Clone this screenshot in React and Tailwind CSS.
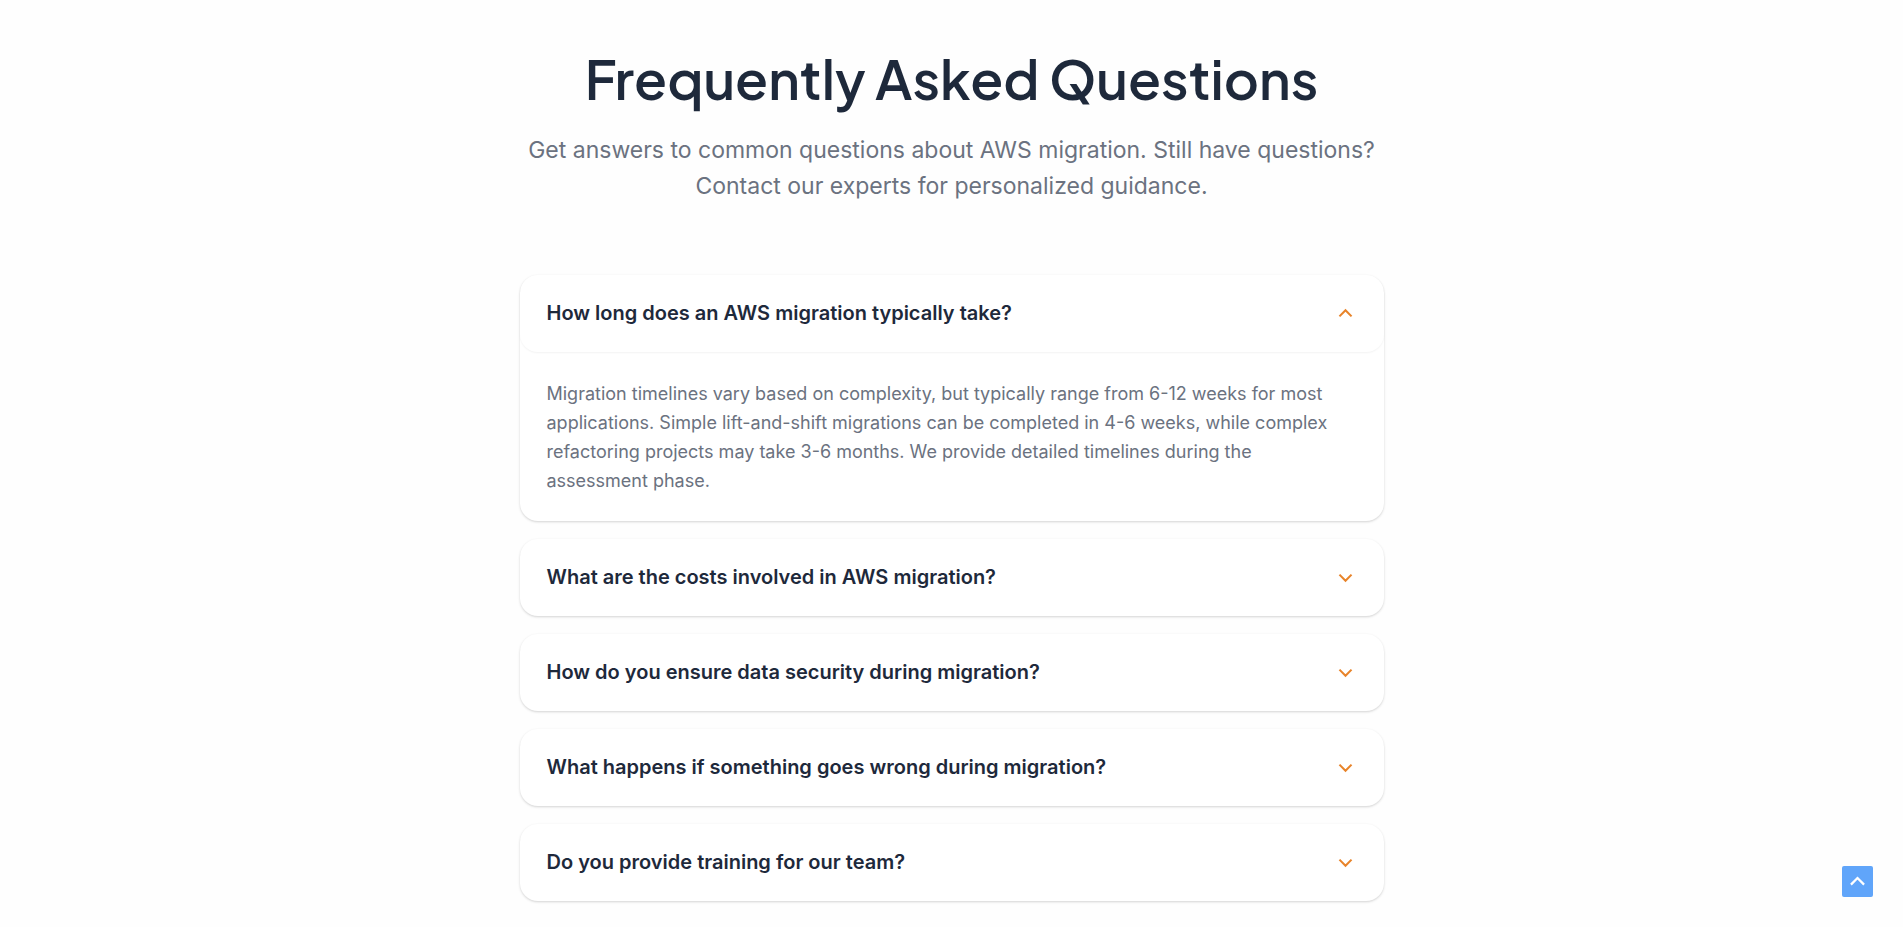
import { useState } from "react";

const faqs = [
  {
    question: "How long does an AWS migration typically take?",
    answer:
      "Migration timelines vary based on complexity, but typically range from 6-12 weeks for most applications. Simple lift-and-shift migrations can be completed in 4-6 weeks, while complex refactoring projects may take 3-6 months. We provide detailed timelines during the assessment phase.",
  },
  { question: "What are the costs involved in AWS migration?" },
  { question: "How do you ensure data security during migration?" },
  { question: "What happens if something goes wrong during migration?" },
  { question: "Do you provide training for our team?" },
];

function Chevron({ up, className }) {
  return (
    <svg viewBox="0 0 24 24" fill="none" stroke="currentColor" strokeWidth="2.2" aria-hidden="true" className={className}>
      <path d={up ? "M5.7 15l6.3-6.3 6.3 6.3" : "M5.7 9l6.3 6.3 6.3-6.3"} />
    </svg>
  );
}

function FaqItem({ id, item, open, onToggle }) {
  return (
    <div className="rounded-[18px] bg-white shadow-[0_1px_3px_rgba(0,0,0,0.1),0_1px_2px_rgba(0,0,0,0.08)]">
      <h3>
        <button
          type="button"
          id={`${id}-button`}
          aria-expanded={open}
          aria-controls={`${id}-panel`}
          onClick={onToggle}
          className={`flex w-full items-center justify-between rounded-[18px] px-[27px] py-6 text-left text-xl/[29px] font-semibold text-[#1e293b] ${open ? "shadow-[0_1px_2px_rgba(0,0,0,0.05)]" : ""}`}
        >
          <span>{item.question}</span>
          <Chevron up={open} className="size-[23px] shrink-0 text-[#e8842a]" />
        </button>
      </h3>
      {open && item.answer && (
        <div
          id={`${id}-panel`}
          role="region"
          aria-labelledby={`${id}-button`}
          className="px-[27px] pt-[27px] pb-[26px] text-lg/[29px] text-[#6b7280]"
        >
          {item.answer}
        </div>
      )}
    </div>
  );
}

export default function App() {
  const [openIndex, setOpenIndex] = useState(0);
  return (
    <main className="min-h-screen bg-[#fefefe] px-6 pt-11 pb-[26px] font-['Inter',sans-serif]">
      <div className="mx-auto max-w-[864px]">
        <header className="mb-[71px] text-center">
          <h1 className="mb-5 font-['Plus_Jakarta_Sans','Inter',sans-serif] text-[54px]/[68px] font-semibold text-[#1e293b]">
            Frequently Asked Questions
          </h1>
          <p className="text-[23px]/[36px] text-[#6b7280]">
            Get answers to common questions about AWS migration. Still have questions? Contact our experts for personalized guidance.
          </p>
        </header>
        <div className="flex flex-col gap-[18px]">
          {faqs.map((item, i) => (
            <FaqItem
              key={item.question}
              id={`faq-${i}`}
              item={item}
              open={openIndex === i}
              onToggle={() => setOpenIndex(openIndex === i ? -1 : i)}
            />
          ))}
        </div>
      </div>
      <button
        type="button"
        aria-label="Back to top"
        onClick={() => window.scrollTo({ top: 0, behavior: "smooth" })}
        className="fixed right-[30px] bottom-[30px] flex size-[31px] items-center justify-center rounded-xs bg-[#60a5fa] text-white"
      >
        <Chevron up className="size-[25px]" />
      </button>
    </main>
  );
}
